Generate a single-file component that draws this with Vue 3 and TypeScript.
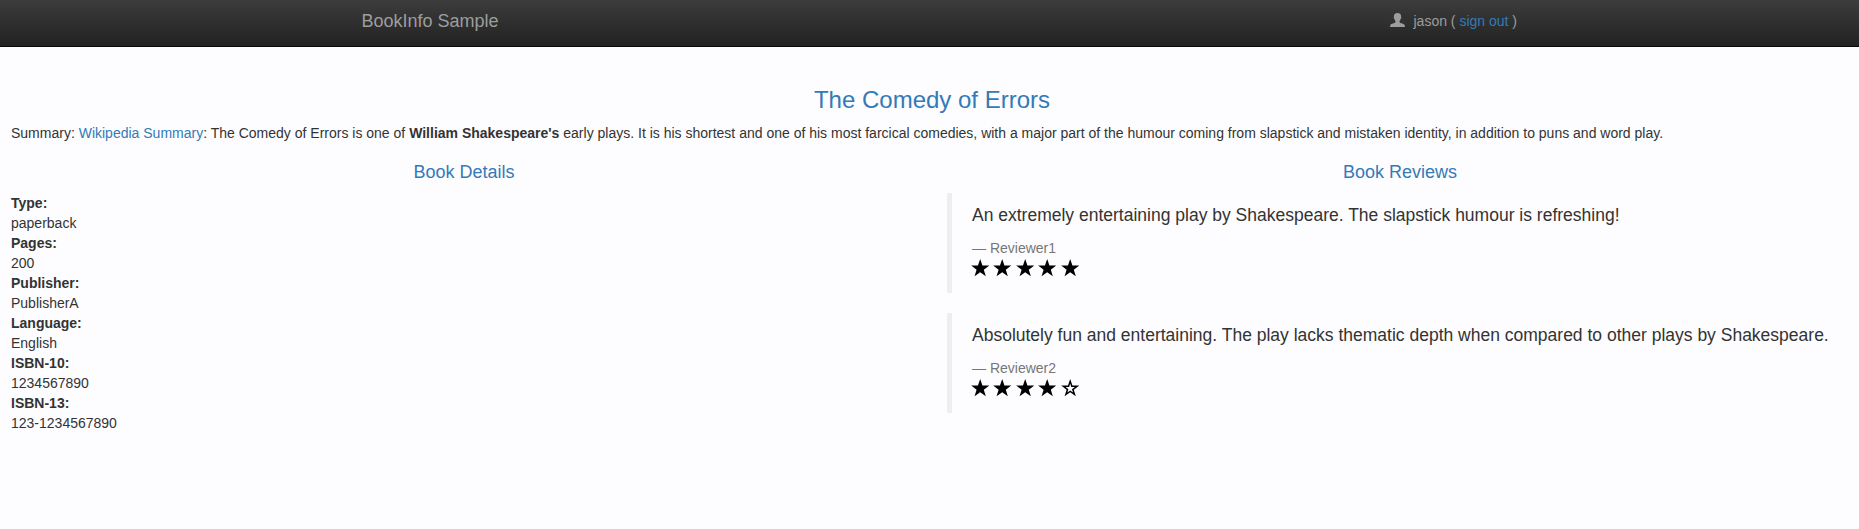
<script setup lang="ts">
interface Detail { label: string; value: string }
interface Review { text: string; reviewer: string; stars: number }

const details: Detail[] = [
  { label: 'Type:', value: 'paperback' },
  { label: 'Pages:', value: '200' },
  { label: 'Publisher:', value: 'PublisherA' },
  { label: 'Language:', value: 'English' },
  { label: 'ISBN-10:', value: '1234567890' },
  { label: 'ISBN-13:', value: '123-1234567890' },
]
const reviews: Review[] = [
  { text: 'An extremely entertaining play by Shakespeare. The slapstick humour is refreshing!', reviewer: 'Reviewer1', stars: 5 },
  { text: 'Absolutely fun and entertaining. The play lacks thematic depth when compared to other plays by Shakespeare.', reviewer: 'Reviewer2', stars: 4 },
]
const full = 'M600 5 L745 425 L1190 425 L834 696 L968 1130 L600 870 L232 1130 L366 696 L10 425 L455 425 Z'
const hollow = full + ' M600 290 L530 525 L300 525 L484 662 L415 880 L600 748 L785 880 L716 662 L900 525 L670 525 Z'
</script>

<template>
  <div class="page">
    <nav class="navbar">
      <div class="container">
        <a class="brand">BookInfo Sample</a>
        <p class="user">
          <svg class="user-icon" viewBox="0 0 15 14"><path d="M7.5 0C5 0 3.7 1.5 3.9 3.9C3.5 4.2 3.7 5.2 4.2 5.5C4.4 6.6 4.9 7.5 5.5 8.1V9.3C4.7 10.3 1 10.5.4 12L0 14H15L14.6 12C14 10.5 10.3 10.3 9.5 9.3V8.1C10.1 7.5 10.6 6.6 10.8 5.5C11.3 5.2 11.5 4.2 11.1 3.9C11.3 1.5 10 0 7.5 0Z" /></svg>
          <span>jason ( <a class="link">sign out</a> )</span>
        </p>
      </div>
    </nav>
    <main>
      <h3>The Comedy of Errors</h3>
      <p class="summary">Summary: <a class="link">Wikipedia Summary</a>: The Comedy of Errors is one of <b>William Shakespeare's</b> early plays. It is his shortest and one of his most farcical comedies, with a major part of the humour coming from slapstick and mistaken identity, in addition to puns and word play.</p>
      <div class="columns">
        <section>
          <h4>Book Details</h4>
          <dl>
            <template v-for="d in details" :key="d.label">
              <dt>{{ d.label }}</dt>
              <dd>{{ d.value }}</dd>
            </template>
          </dl>
        </section>
        <section>
          <h4>Book Reviews</h4>
          <blockquote v-for="r in reviews" :key="r.reviewer">
            <p>{{ r.text }}</p>
            <small>— {{ r.reviewer }}</small>
            <div class="stars">
              <svg v-for="n in 5" :key="n" viewBox="0 0 1200 1200"><path fill-rule="evenodd" :d="n <= r.stars ? full : hollow" /></svg>
            </div>
          </blockquote>
        </section>
      </div>
    </main>
  </div>
</template>

<style>
body { margin: 0; background: #fdfdff; }
</style>
<style scoped>
* { box-sizing: border-box; }
.page { min-height: 529px; background: #fdfdff; color: #333; font: 14px/20px "Liberation Sans", Arial, sans-serif; }
.navbar { height: 47px; background: linear-gradient(#3c3c3c, #222); border-bottom: 1px solid #080808; }
.container { width: 1170px; margin: 0 auto; padding: 0 0 0 17px; display: flex; justify-content: space-between; color: #9d9d9d; }
.brand { font-size: 18px; line-height: 42px; }
.user { margin: 11px 0 0; display: flex; width: 125px; white-space: nowrap; gap: 9px; }
.user-icon { width: 15px; height: 14px; margin-top: 2px; flex: none; fill: #9d9d9d; }
.link, h3, h4 { color: #337ab7; }
main { padding: 0 6px 0 11px; }
h3 { font-size: 24px; line-height: 26px; font-weight: 500; text-align: center; margin: 40px 0 10px; }
.summary { margin: 0 0 10px; white-space: nowrap; }
.columns { display: grid; grid-template-columns: minmax(0, 1fr) minmax(0, 1fr); column-gap: 30px; }
h4 { font-size: 18px; line-height: 20px; font-weight: 500; text-align: center; margin: 9px 0 11px; }
dl, dd { margin: 0; }
dt { font-weight: 700; }
blockquote { margin: 0 0 20px; height: 100px; padding: 10px 20px; border-left: 5px solid #eee; white-space: nowrap; }
blockquote p { margin: 0 0 10px; font-size: 17.5px; line-height: 25px; }
blockquote small { display: block; font-size: 14px; color: #777; }
.stars { display: flex; gap: 4px; margin: 1px 0 0 -1px; }
.stars svg { width: 18.4px; height: 18.4px; flex: none; fill: #000; }
</style>
